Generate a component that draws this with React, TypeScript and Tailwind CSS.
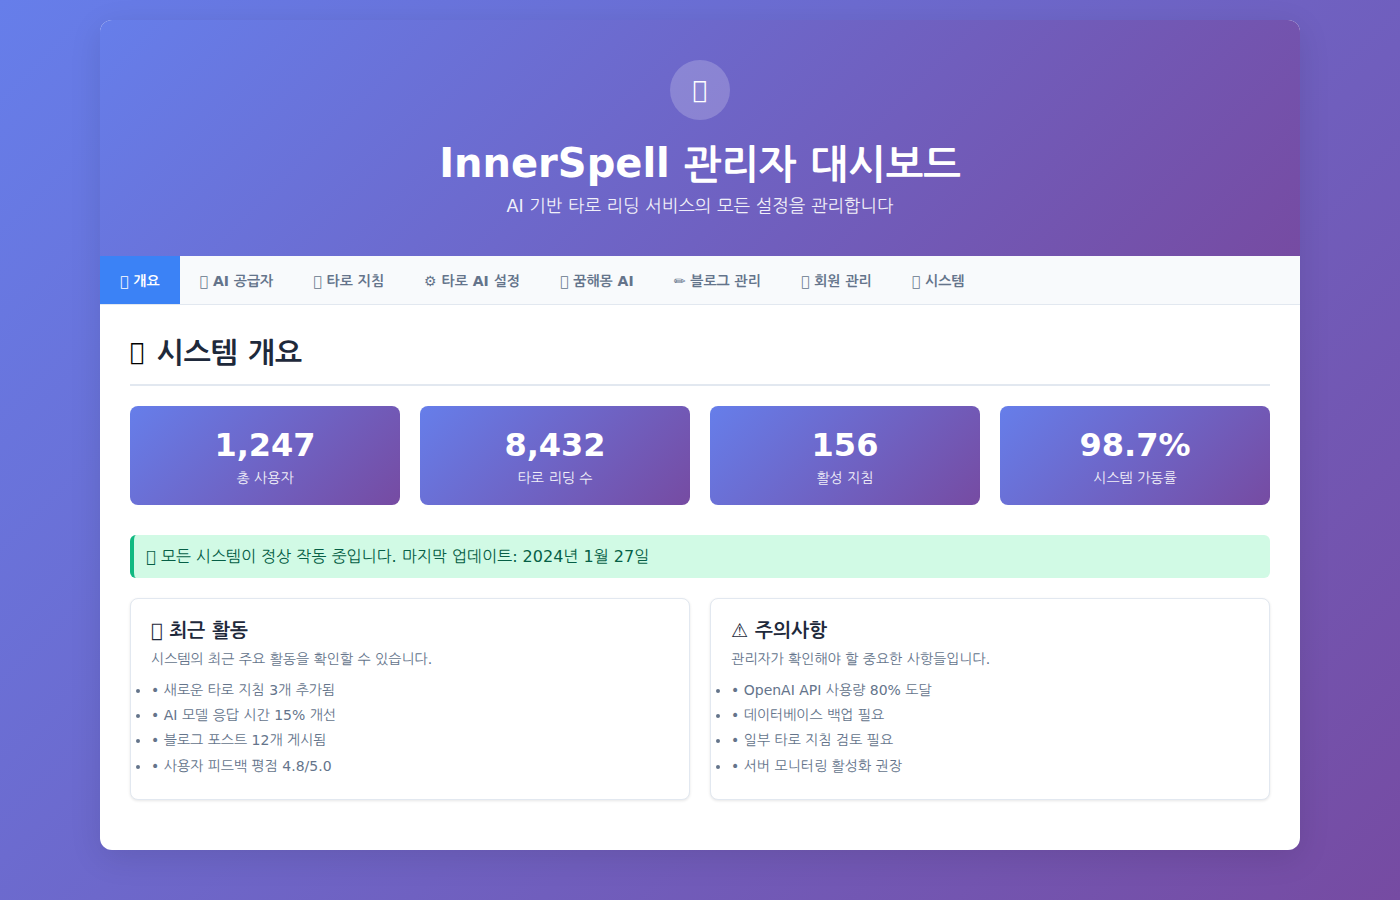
const GLYPH = '\u{10FFFD}';

const tabs = [
  `${GLYPH} 개요`,
  `${GLYPH} AI 공급자`,
  `${GLYPH} 타로 지침`,
  '⚙ 타로 AI 설정',
  `${GLYPH} 꿈해몽 AI`,
  '✏ 블로그 관리',
  `${GLYPH} 회원 관리`,
  `${GLYPH} 시스템`,
];

const stats = [
  { value: '1,247', label: '총 사용자' },
  { value: '8,432', label: '타로 리딩 수' },
  { value: '156', label: '활성 지침' },
  { value: '98.7%', label: '시스템 가동률' },
];

const cards = [
  {
    title: `${GLYPH} 최근 활동`,
    description: '시스템의 최근 주요 활동을 확인할 수 있습니다.',
    items: ['새로운 타로 지침 3개 추가됨', 'AI 모델 응답 시간 15% 개선', '블로그 포스트 12개 게시됨', '사용자 피드백 평점 4.8/5.0'],
  },
  {
    title: '⚠ 주의사항',
    description: '관리자가 확인해야 할 중요한 사항들입니다.',
    items: ['OpenAI API 사용량 80% 도달', '데이터베이스 백업 필요', '일부 타로 지침 검토 필요', '서버 모니터링 활성화 권장'],
  },
];

function Header() {
  return (
    <header className="bg-[linear-gradient(135deg,#667eea_0%,#764ba2_100%)] p-10 text-center text-white">
      <div className="mx-auto mb-5 flex size-[60px] items-center justify-center rounded-full bg-white/20 text-2xl leading-[normal]">{GLYPH}</div>
      <h1 className="mb-[9px] h-[47px] text-[40px] leading-[47px] font-bold">
        InnerSpell <span className="align-[-2px] leading-none">관리자 대시보드</span>
      </h1>
      <p className="text-[17.6px] leading-5 opacity-90">AI 기반 타로 리딩 서비스의 모든 설정을 관리합니다</p>
    </header>
  );
}

function Tabs() {
  return (
    <nav className="flex border-b border-[#e2e8f0] bg-[#f8fafc]">
      {tabs.map((tab, i) => (
        <button
          key={tab}
          className={`px-5 pt-[17px] pb-[15px] text-sm leading-4 font-semibold whitespace-nowrap ${i === 0 ? 'bg-[#3b82f6] text-white' : 'text-[#64748b]'}`}
        >
          {tab}
        </button>
      ))}
    </nav>
  );
}

export default function App() {
  return (
    <div className="min-h-screen bg-[linear-gradient(135deg,#667eea_0%,#764ba2_100%)] p-5 font-['DejaVu_Sans','NanumGothic','Noto_Sans_CJK_KR',sans-serif] leading-[normal]">
      <div className="mx-auto max-w-[1200px] overflow-hidden rounded-xl bg-white shadow-[0_8px_32px_rgba(0,0,0,0.1)]">
        <Header />
        <Tabs />
        <main className="p-[30px]">
          <h2 className="mb-5 flex items-center gap-3 border-b-2 border-[#e2e8f0] pt-px pb-3.5 text-[28.8px] leading-[34px] font-semibold text-[#1e293b]">
            <span className="pb-0.5 text-2xl leading-[normal] font-normal text-black">{GLYPH}</span>
            시스템 개요
          </h2>
          <div className="mb-[30px] grid grid-cols-4 gap-5">
            {stats.map((s) => (
              <div key={s.label} className="rounded-lg bg-[linear-gradient(135deg,#667eea_0%,#764ba2_100%)] px-5 pt-[21px] pb-[18px] text-center text-white">
                <div className="mb-1.5 text-[32px] leading-[37px] font-bold">{s.value}</div>
                <div className="text-sm leading-[17px] opacity-90">{s.label}</div>
              </div>
            ))}
          </div>
          <div className="mb-5 rounded-md border-l-4 border-[#10b981] bg-[#d1fae5] p-3 text-base leading-[19px] text-[#065f46]">
            {GLYPH} 모든 시스템이 정상 작동 중입니다. 마지막 업데이트: 2024년 1월 27일
          </div>
          <div className="mb-5 grid grid-cols-2 gap-5">
            {cards.map((card) => (
              <section key={card.title} className="rounded-lg border border-[#e2e8f0] bg-white p-5 shadow-[0_1px_3px_rgba(0,0,0,0.1)]">
                <h3 className="mb-[9px] text-[19.2px] leading-[23px] font-semibold text-[#1e293b]">{card.title}</h3>
                <p className="mb-[11px] text-sm leading-4 text-[#64748b]">{card.description}</p>
                <ul className="list-disc text-sm leading-[1.8] text-[#64748b]">
                  {card.items.map((item) => (
                    <li key={item}>• {item}</li>
                  ))}
                </ul>
              </section>
            ))}
          </div>
        </main>
      </div>
    </div>
  );
}
